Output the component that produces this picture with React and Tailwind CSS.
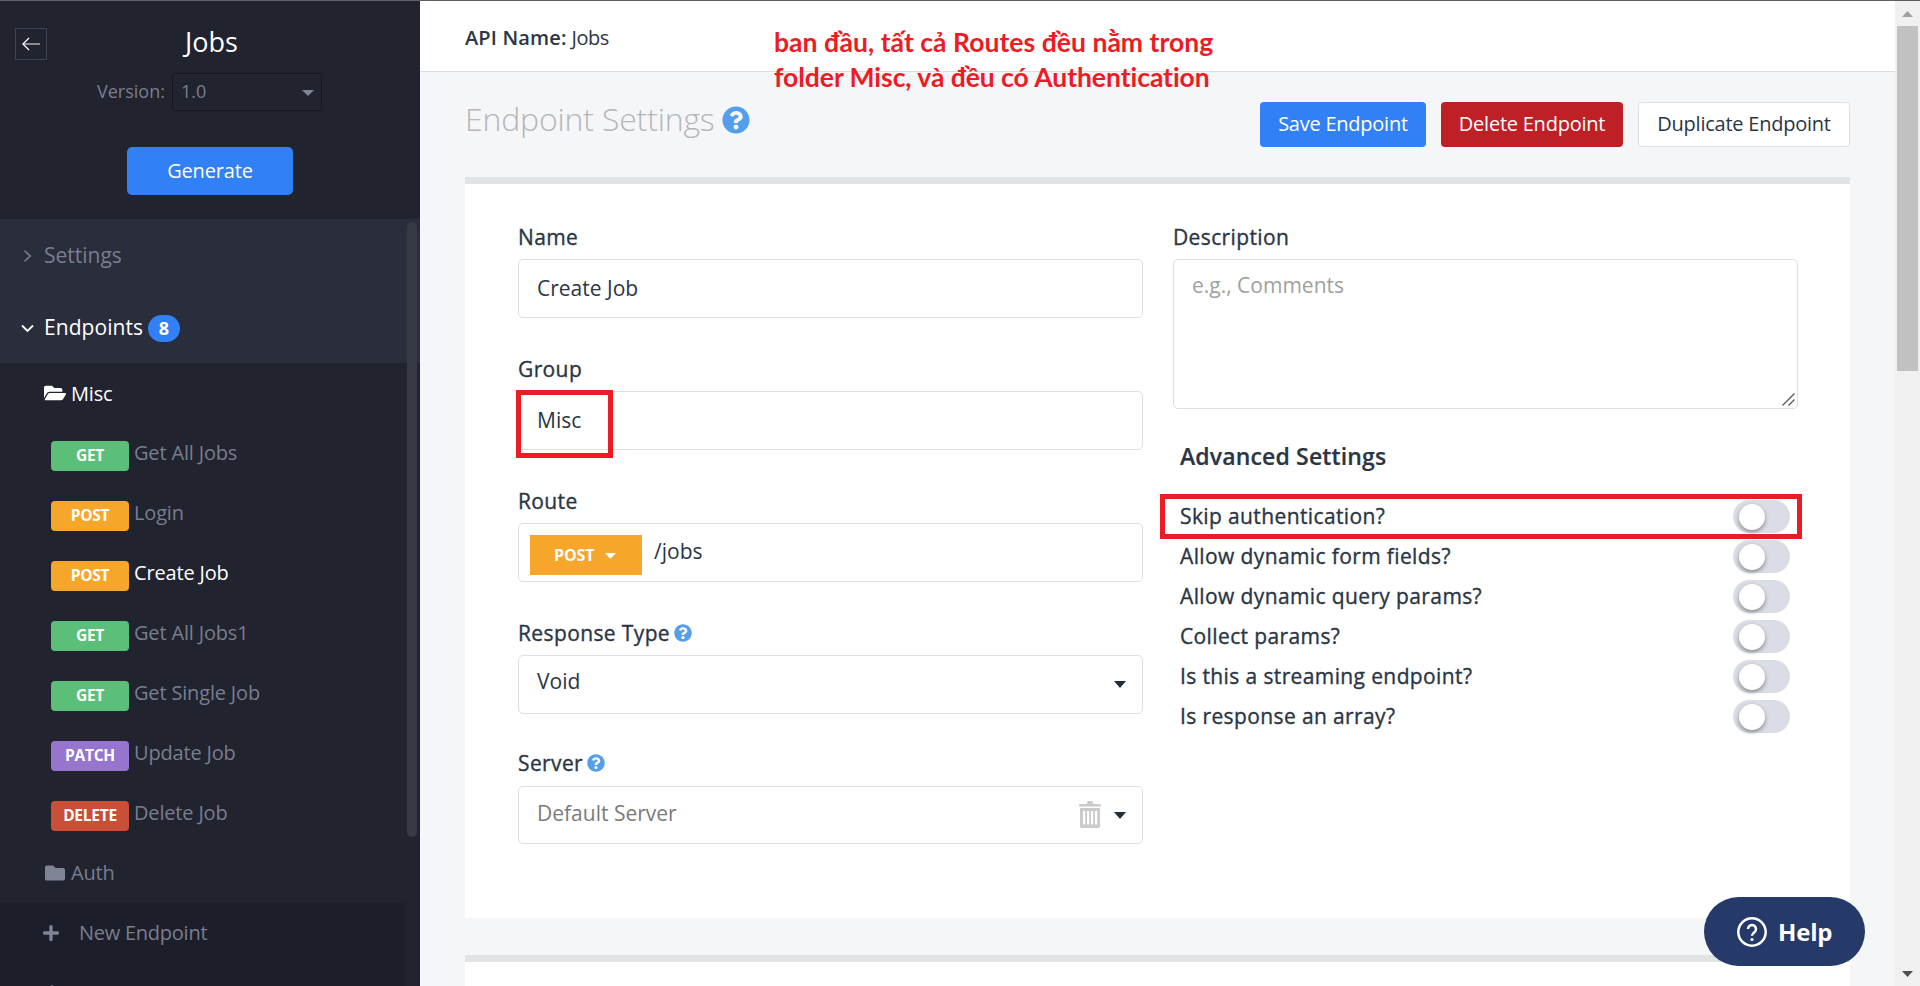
import React from 'react';
import { FaFolderOpen, FaFolder, FaPlus, FaQuestionCircle } from 'react-icons/fa';

const endpoints = [
  { method: 'GET', name: 'Get All Jobs' },
  { method: 'POST', name: 'Login' },
  { method: 'POST', name: 'Create Job', active: true },
  { method: 'GET', name: 'Get All Jobs1' },
  { method: 'GET', name: 'Get Single Job' },
  { method: 'PATCH', name: 'Update Job' },
  { method: 'DELETE', name: 'Delete Job' },
];

const methodColors = {
  GET: 'bg-[#5bbf7a]',
  POST: 'bg-[#f6a62a]',
  PATCH: 'bg-[#9575cd]',
  DELETE: 'bg-[#c94f36]',
};

const toggles = [
  'Skip authentication?',
  'Allow dynamic form fields?',
  'Allow dynamic query params?',
  'Collect params?',
  'Is this a streaming endpoint?',
  'Is response an array?',
];

function Caret({ className }) {
  return (
    <svg className={className} viewBox="0 0 12 6" preserveAspectRatio="none" fill="currentColor">
      <path d="M0 0h12L6 6z" />
    </svg>
  );
}

function Trash() {
  return (
    <svg className="mb-px h-[27px] w-[22px] text-[#cbcbcb]" viewBox="0 0 22 27" fill="currentColor">
      <path d="M8 3V1.5Q8 0 9.500 0h3Q14 0 14 1.500V3h7q1 0 1 1v1.500H0V4q0-1 1-1z" />
      <path
        fillRule="evenodd"
        d="M1 7h20v18.500q0 1.500-1.500 1.500H2.500Q1 27 1 25.500zM4 10v13.500h2.200V10zM8 10v13.500h2.200V10zM12 10v13.500h2.200V10zM16 10v13.500h2.200V10z"
      />
    </svg>
  );
}

function Sidebar() {
  return (
    <aside className="flex w-[420px] shrink-0 bg-[#21232e] text-[#787e90]">
      <div className="flex w-full flex-col">
        <div className="flex h-[218px] flex-col">
          <div className="flex h-[72px] items-start pt-[27px] pl-[15px]">
            <button className="flex size-8 items-center justify-center border border-[#3e4154]">
              <svg className="h-[14px] w-[18px]" viewBox="0 0 18 14" fill="none">
                <path d="M1 7h17" stroke="#a9a6ab" strokeWidth="1.600" />
                <path d="M7 1L1 7l6 6" stroke="#fff" strokeWidth="1.300" />
              </svg>
            </button>
            <h1 className="ml-[138px] -mt-[2px] text-[27px] leading-[32px] text-white">Jobs</h1>
          </div>
          <div className="flex h-[38px] items-center pl-[97px]">
            <span className="w-[75px] pb-[2px] text-[18px]">Version:</span>
            <div className="flex h-[38px] w-[150px] items-center justify-between rounded-[3px] border border-[#14151d] pr-[7px] pl-[8px]">
              <span className="pb-[2px] text-[18px]">1.0</span>
              <Caret className="mt-px h-[6px] w-[12px] text-[#7f8496]" />
            </div>
          </div>
          <button className="mt-9 ml-[127px] h-12 w-[166px] rounded-[5px] bg-[#3280f6] pb-px text-[20px] tracking-[-0.150px] text-white">
            Generate
          </button>
        </div>
        <div className="relative flex-1 overflow-hidden">
          <div className="h-36 bg-[#2a2d3b] text-[21px]">
            <div className="flex h-[72px] items-center pl-[23px]">
              <svg className="mt-[2px] h-[12px] w-[9px]" viewBox="0 0 9 12" fill="none" stroke="#7f8496" strokeWidth="1.500">
                <path d="M1.500 0.800L7.300 6l-5.800 5.200" />
              </svg>
              <span className="ml-[12px] pt-[2px]">Settings</span>
            </div>
            <div className="flex h-[72px] items-center pl-[21px] text-white">
              <svg className="mt-[2px] h-[9px] w-[13px]" viewBox="0 0 13 9" fill="none" stroke="#fff" strokeWidth="1.800">
                <path d="M1 1.500L6.500 7 12 1.500" />
              </svg>
              <span className="ml-[10px] pt-[2px] tracking-[0.050px]">Endpoints</span>
              <span className="ml-[5px] mt-[2px] flex h-[27px] w-8 items-center justify-center rounded-full bg-[#3280f6] pt-px text-[18px] font-bold">
                8
              </span>
            </div>
          </div>
          <div className="text-[20px] tracking-[-0.170px]">
            <div className="flex h-[60px] items-center pl-[44px] text-white">
              <FaFolderOpen className="h-[20px] w-[22px]" />
              <span className="ml-[5px] pt-px">Misc</span>
            </div>
            {endpoints.map((e) => (
              <div key={e.name} className="flex h-[60px] items-center pl-[51px]">
                <span
                  className={`mt-[6px] flex h-[30px] w-[78px] items-center justify-center rounded-[4px] pb-px text-[15.500px] font-bold tracking-[-0.250px] text-white ${methodColors[e.method]}`}
                >
                  {e.method}
                </span>
                <span className={`ml-[5px] ${e.active ? 'text-white' : ''}`}>{e.name}</span>
              </div>
            ))}
            <div className="flex h-[60px] items-center pl-[45px]">
              <FaFolder className="size-[20px] text-[#7f8496]" />
              <span className="ml-[6px]">Auth</span>
            </div>
            <div className="w-[405px] bg-[#1c1e29]">
              <div className="flex h-[60px] items-center pl-[42px]">
                <FaPlus className="size-[18px] text-[#7f8496]" />
                <span className="ml-[19px] tracking-[-0.250px]">New Endpoint</span>
              </div>
              <div className="flex h-[60px] items-center pl-[43px]">
                <FaPlus className="size-[18px] text-[#7f8496]" />
              </div>
            </div>
          </div>
          <div className="absolute top-[3px] left-[407px] h-[615px] w-[10px] rounded-full bg-[#373a44]" />
        </div>
      </div>
    </aside>
  );
}

function Label({ children, help }) {
  return (
    <div className="flex h-10 items-center pt-px text-[21px] tracking-[0.380px] [-webkit-text-stroke:0.350px_#2b3544]">
      {children}
      {help && <FaQuestionCircle className="mb-px ml-[4px] size-[18px] text-[#559eed] [-webkit-text-stroke:0]" />}
    </div>
  );
}

function Box({ children, className = '' }) {
  return (
    <div className={`flex w-[625px] items-center rounded-[5px] border border-[#dcdfe8] text-[21px] ${className}`}>
      {children}
    </div>
  );
}

function Form() {
  return (
    <section className="flex h-[741px] gap-[30px] border-t-[7px] border-[#e2e3e5] bg-white pt-[33px] pl-[53px]">
      <div className="flex w-[625px] flex-col">
        <Label>Name</Label>
        <Box className="mt-[2px] h-[59px] pl-[18px]">Create Job</Box>
        <div className="relative mt-[31px]">
          <Label>Group</Label>
          <Box className="mt-[2px] h-[59px] pl-[18px]">Misc</Box>
          <div className="absolute top-[41px] -left-[2px] h-[68px] w-[97px] border-[5px] border-[#ed1c24]" />
        </div>
        <div className="mt-[31px]">
          <Label>Route</Label>
          <Box className="mt-[2px] h-[59px] pl-[11px]">
            <div className="mt-[5px] flex h-10 w-[112px] items-center bg-[#f6a62a] pb-px pl-[24px] text-[16px] font-bold tracking-[-0.100px] text-white">
              POST
              <Caret className="mt-[3px] ml-[11px] h-[6px] w-[11px]" />
            </div>
            <span className="ml-[12px] pb-px">/jobs</span>
          </Box>
        </div>
        <div className="mt-[31px]">
          <Label help>Response Type</Label>
          <Box className="mt-[2px] h-[59px] justify-between pr-[16px] pl-[18px]">
            <span className="pb-[6px]">Void</span>
            <Caret className="h-[7px] w-[12px] text-[#222e3c]" />
          </Box>
        </div>
        <div className="mt-[29px]">
          <Label help>Server</Label>
          <Box className="mt-[3px] h-[58px] pr-[16px] pl-[18px]">
            <span className="flex-1 pb-[2px] text-[#7b7b7b]">Default Server</span>
            <Trash />
            <Caret className="ml-[13px] h-[7px] w-[12px] text-[#222e3c]" />
          </Box>
        </div>
      </div>
      <div className="w-[625px]">
        <Label>Description</Label>
        <div className="mt-[2px] flex h-[150px] justify-between rounded-[5px] border border-[#dcdfe8] pl-[18px]">
          <span className="pt-[9px] text-[21px] leading-8 text-[#a0a0a0]">e.g., Comments</span>
          <svg className="mr-[2px] mb-[2px] h-[13px] w-[13px] self-end" viewBox="0 0 13 13" stroke="#555" strokeWidth="1.300">
            <path d="M0.500 12.500l12-12M6.500 12.500l6-6" />
          </svg>
        </div>
        <h3 className="mt-[17px] pl-[7px] text-[23px] leading-[60px] font-semibold tracking-[0.150px] [-webkit-text-stroke:0.200px_#2b3544]">
          Advanced Settings
        </h3>
        <div className="relative mt-[10px] pr-[8px] pl-[7px]">
          {toggles.map((t) => (
            <div key={t} className="flex h-10 items-center justify-between">
              <Label>{t}</Label>
              <div className="mt-px flex h-[33px] w-[57px] items-center rounded-full bg-[#dadde5] pl-[6px]">
                <div className="size-[26px] rounded-full bg-white shadow-[0_2px_4px_rgba(0,0,0,0.400)]" />
              </div>
            </div>
          ))}
          <div className="absolute -top-[2px] -left-[13px] h-[45px] w-[642px] border-[5px] border-[#ed1c24]" />
        </div>
      </div>
    </section>
  );
}

export default function App() {
  return (
    <div className="relative flex h-[986px] w-[1920px] overflow-hidden border-t border-[#605d66] bg-[#f5f6f8] font-['Open_Sans',sans-serif] leading-normal text-[#2b3544]">
      <Sidebar />
      <main className="flex flex-1 flex-col overflow-hidden">
        <header className="flex h-[71px] shrink-0 items-center border-b border-[#dadfe3] bg-white pt-[4px] pl-[45px] text-[20px]">
          <span className="font-semibold tracking-[0.150px]">API Name:</span>
          <span className="ml-[5px] tracking-[-0.500px]">Jobs</span>
        </header>
        <div className="flex-1 px-[45px]">
          <div className="flex h-[105px] items-center">
            <h2 className="flex-1 text-[32px] leading-[40px] font-light text-[#b4b5b8]">
              <span className="flex items-center pb-[12px] tracking-[-0.180px]">
                Endpoint Settings
                <FaQuestionCircle className="mt-[2px] ml-[7px] size-[28px] text-[#559eed]" />
              </span>
            </h2>
            <div className="flex gap-[15px] text-[20px] tracking-[-0.240px]">
              <button className="h-[45px] w-[166px] rounded-[4px] bg-[#3280f6] pb-px text-white">Save Endpoint</button>
              <button className="h-[45px] w-[182px] rounded-[4px] bg-[#be2026] pb-px text-white">Delete Endpoint</button>
              <button className="h-[45px] w-[212px] rounded-[4px] border border-[#dadfe8] bg-white pb-px">
                Duplicate Endpoint
              </button>
            </div>
          </div>
          <Form />
          <section className="mt-[37px] h-[60px] border-t-[7px] border-[#e2e3e5] bg-white" />
        </div>
      </main>
      <div className="flex w-[25px] flex-col items-center bg-[#f0f0f0]">
        <Caret className="mt-[10px] h-[6px] w-[11px] rotate-180 text-[#a0a0a0]" />
        <div className="mt-[9px] h-[345px] w-[21px] bg-[#c1c1c1]" />
        <div className="flex-1" />
        <Caret className="mb-[9px] h-[6px] w-[11px] text-[#505050]" />
      </div>
      <div className="absolute top-[24px] left-[774px] font-['Lato',sans-serif] text-[26.500px] leading-[35px] font-bold whitespace-nowrap text-[#ed1c24] [font-variant-ligatures:none]">
        <span className="tracking-[0.040px]">ban đầu, tất cả Routes đều nằm trong</span>
        <br />
        <span className="tracking-[-0.050px]">folder Misc, và đều có Authentication</span>
      </div>
      <button className="absolute top-[896px] left-[1704px] flex h-[69px] w-[161px] items-center rounded-full bg-[#263a69] pl-[33px] text-[24px] font-bold text-white">
        <svg className="h-[30px] w-[30px]" viewBox="0 0 30 30" fill="none" stroke="currentColor">
          <circle cx="15" cy="15" r="13.700" strokeWidth="2.500" />
          <path d="M11 12a4 4 0 1 1 6.400 3.200c-1.500 1.100-2.400 1.800-2.400 3.600" strokeWidth="2.500" />
          <circle cx="15" cy="22.500" r="1.600" fill="currentColor" stroke="none" />
        </svg>
        <span className="ml-[11px] tracking-[-0.200px]">Help</span>
      </button>
    </div>
  );
}
